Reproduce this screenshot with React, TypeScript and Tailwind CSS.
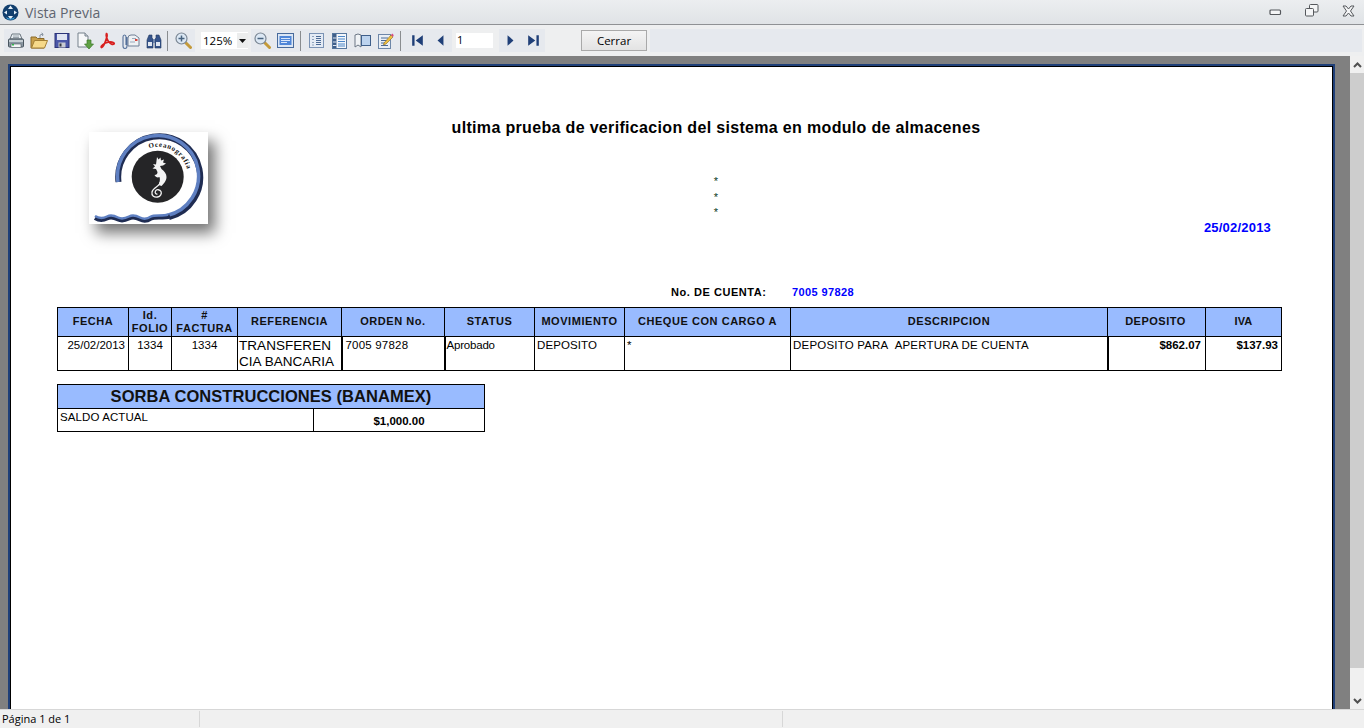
import React from "react";

const arial = "font-['Liberation_Sans',Arial,sans-serif]";

const Printer = () => (
  <svg width="18" height="18" viewBox="0 0 18 18">
    <path d="M5 2h8l2 5H3z" fill="#e8eef2" stroke="#6b7680" />
    <path d="M6 4h6M6 5.500h6" stroke="#9aa4ad" />
    <path d="M1.500 8q0-1 1-1h13q1 0 1 1v6q0 1-1 1h-13q-1 0-1-1z" fill="#8b98a3" stroke="#4a5660" />
    <rect x="2" y="8" width="14" height="2" fill="#c6ced4" />
    <rect x="4" y="12" width="10" height="3.500" fill="#f4f6f7" stroke="#4a5660" strokeWidth="0.6" />
    <rect x="5" y="12" width="2" height="1.500" fill="#2fb84a" />
  </svg>
);

const Folder = () => (
  <svg width="18" height="18" viewBox="0 0 18 18">
    <path d="M1 5h5l1.500 1.500H14V16H1z" fill="#c9a04c" stroke="#8a6a2a" />
    <path d="M10 6V3l3-1M13 2l-1.500-1M13 2l-.5 2" fill="none" stroke="#8592a0" />
    <path d="M1.500 16 4.500 8.500H17.500L14.500 16z" fill="#f6d98a" stroke="#a37f35" />
  </svg>
);

const Save = () => (
  <svg width="16" height="17" viewBox="0 0 16 17">
    <rect x="1" y="1.500" width="14" height="14" fill="#4a57a8" stroke="#2c3578" />
    <rect x="3" y="2" width="10" height="6" fill="#dfe4f2" />
    <rect x="4.500" y="10.500" width="7" height="5" fill="#c8cbd2" />
    <rect x="5.500" y="11.500" width="2" height="3" fill="#30343f" />
  </svg>
);

const Export = () => (
  <svg width="18" height="18" viewBox="0 0 18 18">
    <path d="M2 1h7l3 3v11H2z" fill="#f7f8fa" stroke="#77818c" />
    <path d="M9 1v3h3" fill="#cfd6dd" stroke="#77818c" />
    <path d="M11 8h4v4h2.500l-4.500 5-4.500-5H11z" fill="#5fa044" stroke="#3c7a2a" strokeWidth="0.7" />
  </svg>
);

const Pdf = () => (
  <svg width="17" height="17" viewBox="0 0 17 17">
    <path
      d="M7.500 1.500c-1 2 .5 6 2 8 1.500 2 4 3.500 5.500 2.500 1-1-1.500-2.500-5-2-3 .4-6 2-7.500 4-1 1.500 0 2 1 1 2-2 3.500-7 4.500-10.500 .3-2-.2-3-.5-3z"
      fill="none"
      stroke="#d8201f"
      strokeWidth="1.700"
    />
  </svg>
);

const MailClip = () => (
  <svg width="18" height="18" viewBox="0 0 18 18">
    <path d="M6 6q0-3 3-3h4l4 3v8H6z" fill="#eef1f4" stroke="#6f7f95" />
    <path d="M10 6.500h4" stroke="#9aa9bb" />
    <rect x="13" y="7" width="2.500" height="2" fill="#d8433a" />
    <path d="M8 10h5" stroke="#9aa9bb" />
    <path d="M5 5v9q0 2.500-2 2.500T1 14V5q0-2 1.500-2T4 5v8" fill="none" stroke="#54709a" strokeWidth="1.100" />
  </svg>
);

const Binoculars = () => (
  <svg width="16" height="16" viewBox="0 0 16 16">
    <path d="M3 2h3v3l1 1v9H1V7z" fill="#35548c" stroke="#23395f" strokeWidth="0.6" />
    <path d="M13 2h-3v3L9 6v9h6V7z" fill="#35548c" stroke="#23395f" strokeWidth="0.6" />
    <rect x="2" y="9" width="4" height="4" fill="#dfe7f2" />
    <rect x="10" y="9" width="4" height="4" fill="#dfe7f2" />
    <rect x="7" y="6" width="2" height="4" fill="#6f86ad" />
  </svg>
);

const Magnifier = ({ plus }: { plus?: boolean }) => (
  <svg width="17" height="17" viewBox="0 0 17 17">
    <path d="m10.500 10.500 5 5" stroke="#c49a3a" strokeWidth="3" strokeLinecap="round" />
    <circle cx="6.500" cy="6.500" r="5.500" fill="#dbe7f4" stroke="#7b8794" strokeWidth="1.200" />
    <path d="M3.500 6.500h6" stroke="#47627f" strokeWidth="1.500" />
    {plus && <path d="M6.500 3.500v6" stroke="#47627f" strokeWidth="1.500" />}
  </svg>
);

const PageWide = () => (
  <svg width="17" height="15" viewBox="0 0 17 15">
    <rect x="0.500" y="0.500" width="16" height="14" fill="#dbe6f5" stroke="#476a9c" />
    <rect x="2.500" y="3" width="12" height="9" fill="#4f86d8" />
    <path d="M4 5.500h9M4 7.500h9M4 9.500h6" stroke="#d8e6fa" />
  </svg>
);

const Outline = () => (
  <svg width="15" height="15" viewBox="0 0 15 15">
    <rect x="0.500" y="0.500" width="14" height="14" fill="#e4ebf5" stroke="#7b93b5" />
    <path d="M3 3.500h2M3 6.500h2M3 9.500h2M3 12h2" stroke="#8fa3bd" />
    <path d="M7 3.500h5M7 5.500h5M7 7.500h5M7 9.500h5M7 11.500h5" stroke="#4b6a96" />
  </svg>
);

const Thumbs = () => (
  <svg width="15" height="16" viewBox="0 0 15 16">
    <rect x="0.500" y="0.500" width="14" height="15" fill="#f4f7fb" stroke="#56779f" />
    <rect x="1" y="1" width="3.500" height="14" fill="#3f5f8a" />
    <path d="M6 3.500h7M6 6h7M6 8.500h7M6 11h7M6 13h7" stroke="#4b86c8" />
    <path d="M1 5h3.500M1 9h3.500M1 12.500h3.500" stroke="#dfe7f2" />
  </svg>
);

const Book = () => (
  <svg width="17" height="15" viewBox="0 0 17 15">
    <path d="M1 2q3-2 6 0v12l-3-2-3 2z" fill="#f0f3f6" stroke="#6c7785" />
    <rect x="7.500" y="2.500" width="9" height="10" fill="#bcd3ee" stroke="#3f5f8a" />
  </svg>
);

const Note = () => (
  <svg width="16" height="17" viewBox="0 0 16 17">
    <rect x="0.500" y="2.500" width="12" height="14" fill="#e9eff6" stroke="#6e87a8" />
    <path d="M3 6h7M3 8.500h6M3 11h5M3 13.500h7" stroke="#4b6a96" />
    <path d="m6 11 7-8 2 2-7 7-2.500 1z" fill="#f0c040" stroke="#8a6a20" strokeWidth="0.600" />
    <path d="m13 3 1.200-1.500 1.500 1.500L15 5z" fill="#d6487e" />
  </svg>
);

const Nav = ({ d }: { d: string }) => (
  <svg width="13" height="13" viewBox="0 0 11 11">
    <path d={d} fill="#1f3f78" />
  </svg>
);

const Sep = ({ className }: { className: string }) => <div className={`h-[20px] w-[1px] bg-[#8a8d90] ${className}`} />;

const Tool = ({ children }: { children: React.ReactNode }) => (
  <div className="flex h-full w-[23px] items-center justify-center">{children}</div>
);

const Logo = () => (
  <div className="h-[92px] w-[119px] bg-white shadow-[7px_9px_14px_rgba(0,0,0,0.55)]">
    <svg width="119" height="92" viewBox="0 0 119 92">
      <defs>
        <path id="logoArc" d="M60 16.300A30 30 0 0 1 98.700 40.600" />
      </defs>
      <path d="M29.500 50A41 41 0 1 1 80 85" fill="none" stroke="#1f2c52" strokeWidth="6" />
      <path d="M29 50A40.500 40.500 0 1 1 78 83.500" fill="none" stroke="#5f80c2" strokeWidth="3.500" />
      <circle cx="68.700" cy="44.700" r="26" fill="#252527" />
      <text className="font-['Liberation_Serif',serif]" fontSize="7" fontWeight="700" letterSpacing="0.700" fill="#111">
        <textPath href="#logoArc">Oceanografia</textPath>
      </text>
      {/* caballito de mar */}
      <path
        d="M68 25l1.500 2.500 2-2 .5 3 3-1-1 3 3 1-3 2-3 .5 1.500 3c3 2 5 5 5 8 0 4-3 7-5 9l-3-1c1-3 2-5 1-8-2 1-4 0-5-2 2 0 3-1 3-3l-1.500-3-3.500-.5 2.500-2-2-2.500 3 .5z"
        fill="#f4f4f4"
      />
      <path
        d="M71 50c1 4-7 5-8 10-.8 4 2.500 5.500 5.500 5s4.500-3.500 3.500-5.500-4.500-2.500-5.500-.5 .5 3.500 2 3"
        fill="none"
        stroke="#f4f4f4"
        strokeWidth="1.300"
      />
      <path
        d="M6 86c4 2.500 8 2.500 12 .5s7-1 11 1 7 1 11-1 7-1 11 1 8 1 11-1 12 0 19-2"
        fill="none"
        stroke="#1f2c52"
        strokeWidth="4"
      />
      <path
        d="M6 84c4 2.500 8 2.500 12 .5s7-1 11 1 7 1 11-1 7-1 11 1 8 1 11-1 12 0 17-2"
        fill="none"
        stroke="#5f80c2"
        strokeWidth="2.500"
      />
    </svg>
  </div>
);

const widths = [71, 43, 66, 104, 103, 90, 90, 166, 317, 98, 76];

const headers: { label: React.ReactNode; cls?: string }[] = [
  { label: "FECHA" },
  { label: <>Id.<br />FOLIO</> },
  { label: <>#<br />FACTURA</> },
  { label: "REFERENCIA" },
  { label: "ORDEN No." },
  { label: "STATUS" },
  { label: "MOVIMIENTO" },
  { label: "CHEQUE CON CARGO A" },
  { label: "DESCRIPCION" },
  { label: "DEPOSITO", cls: "tracking-[0.5px] pr-[2px]" },
  { label: "IVA", cls: "tracking-[0.1px]" },
];

export default function App() {
  return (
    <div className={`flex h-[728px] w-[1364px] flex-col overflow-hidden bg-[#f0f0f0] ${arial}`}>
      {/* title bar */}
      <div className="flex h-[25px] shrink-0 items-center border-b border-[#8f9194] bg-gradient-to-b from-[#eceef0] to-[#e0e3e6]">
        <svg className="ml-[2px]" width="17" height="17" viewBox="0 0 17 17">
          <circle cx="8.500" cy="8.500" r="8" fill="#123f6e" />
          <path d="M8.500 1.500 11 5H6zM8.500 15.500 6 12h5zM2 8.500 5 6.500v4zM15 8.500l-3-2v4z" fill="#e6f0f8" />
          <path d="M4 13q4.500 3 9 0l-1.500 2.500h-6z" fill="#3fa0d8" />
        </svg>
        <span className="ml-[6px] font-['Open_Sans',sans-serif] text-[14px] text-[#5f6570]">Vista Previa</span>
        <div className="ml-auto flex items-center">
          <svg width="13" height="7" viewBox="0 0 13 7">
            <rect x="1" y="1" width="10.500" height="4.500" rx="1" fill="#f4f5f6" stroke="#55585c" strokeWidth="1.200" />
          </svg>
          <svg className="ml-[23px] -mt-[3px]" width="14" height="13" viewBox="0 0 14 13">
            <rect x="4.500" y="0.500" width="8.500" height="7.500" rx="1" fill="#f4f5f6" stroke="#55585c" />
            <rect x="0.500" y="4.500" width="8" height="7.500" rx="1" fill="#f4f5f6" stroke="#55585c" />
          </svg>
          <svg className="ml-[23px] mr-[9px] -mt-[3px]" width="13" height="12" viewBox="0 0 13 12">
            <path d="M1 1h3l2.500 3L9 1h3L8.500 6 12 11H9L6.500 8 4 11H1l3.500-5z" fill="#f4f5f6" stroke="#55585c" />
          </svg>
        </div>
      </div>

      {/* toolbar */}
      <div className="flex h-[31px] shrink-0 items-center bg-[#eeeff0] pl-[4px] pr-[2px] text-black">
        <div className="flex h-[23px] items-center bg-[#e6e9ee]">
          <Tool><Printer /></Tool>
          <Tool><Folder /></Tool>
          <Tool><Save /></Tool>
          <Tool><Export /></Tool>
          <Tool><Pdf /></Tool>
          <Tool><MailClip /></Tool>
          <Tool><Binoculars /></Tool>
          <Sep className="ml-[2px] mr-[4px]" />
          <Tool><Magnifier plus /></Tool>
        </div>
        <div className="ml-[6px] flex h-[17px] w-[47px] items-center bg-white pl-[2px] font-['Open_Sans',sans-serif] text-[11.500px]">
          <span className="flex-1">125%</span>
          <span className="flex h-[15px] w-[11px] items-center justify-center bg-[#eceded]">
            <svg width="7" height="4" viewBox="0 0 7 4"><path d="M0 0h7L3.500 4z" fill="#111" /></svg>
          </span>
        </div>
        <div className="ml-[3px] flex h-[23px] items-center bg-[#e6e9ee]">
          <Tool><Magnifier /></Tool>
          <Tool><PageWide /></Tool>
          <Sep className="ml-[3px] mr-[4px]" />
          <Tool><Outline /></Tool>
          <Tool><Thumbs /></Tool>
          <Tool><Book /></Tool>
          <Tool><Note /></Tool>
          <Sep className="ml-[3px] mr-[5px]" />
          <Tool><Nav d="M1 1h2v9H1zM10 1v9L4 5.500z" /></Tool>
          <Tool><Nav d="M8 1v9L3 5.500z" /></Tool>
        </div>
        <div className="ml-[4px] flex h-[15px] w-[37px] items-center bg-white pl-[1px] font-['Open_Sans',sans-serif] text-[11px]">1</div>
        <div className="ml-[6px] flex h-[23px] items-center bg-[#e6e9ee]">
          <Tool><Nav d="M3 1v9l5-4.500z" /></Tool>
          <Tool><Nav d="M1 1v9l6-4.500zM8 1h2v9H8z" /></Tool>
        </div>
        <button className="ml-[36px] flex h-[21px] w-[66px] items-center justify-center border border-[#a9a9a9] bg-gradient-to-b from-[#f4f4f4] to-[#e3e3e3] font-['Open_Sans',sans-serif] text-[11.500px] text-black">
          Cerrar
        </button>
        <div className="ml-[3px] h-[23px] flex-1 bg-[#e6e9ee]" />
      </div>

      {/* viewer */}
      <div className="flex min-h-0 flex-1">
        <div className="flex-1 overflow-hidden bg-[#808080] pl-[8px] pr-[15px] pt-[8px]">
          <div className="h-[700px] border-[2px] border-b-0 border-[#1f3f78]">
            <div className="h-full border border-b-0 border-black bg-white pl-[46px] text-black">
              {/* report header */}
              <div className="flex">
                <div className="w-[151px] shrink-0 pl-[32px] pt-[65px]">
                  <Logo />
                </div>
                <div className="w-[1063px] shrink-0 pt-[52px]">
                  <div className="w-[1016px] text-center text-[16px] font-bold leading-[18px] tracking-[0.33px]">
                    ultima prueba de verificacion del sistema en modulo de almacenes
                  </div>
                  <div className="mt-[37px] w-[1016px] text-center text-[11px] leading-[15.500px] text-[#0a3a1a]">
                    <div>*</div>
                    <div>*</div>
                    <div>*</div>
                  </div>
                  <div className="text-right text-[13px] font-bold leading-[14px] tracking-[0.2px] text-[#0000ff]">25/02/2013</div>
                </div>
              </div>

              {/* cuenta */}
              <div className="mt-[50px] flex text-[11px] font-bold leading-[14px]">
                <span className="ml-[614px] w-[121px] tracking-[0.55px]">No. DE CUENTA:</span>
                <span className="text-[#0000ff] tracking-[0.4px]">7005 97828</span>
              </div>

              {/* movimientos */}
              <table className="mt-[8px] table-fixed border-collapse" style={{ width: 1224 }}>
                <colgroup>
                  {widths.map((w, i) => (
                    <col key={i} style={{ width: w }} />
                  ))}
                </colgroup>
                <thead>
                  <tr className="h-[29px] bg-[#99bbff]">
                    {headers.map((h, i) => (
                      <th
                        key={i}
                        className={`border border-black p-0 text-center text-[11px] font-bold leading-[13px] text-[#111] ${h.cls ?? "tracking-[0.55px]"}`}
                      >
                        {h.label}
                      </th>
                    ))}
                  </tr>
                </thead>
                <tbody>
                  <tr className="h-[34px] align-top text-[11.500px] leading-[14px]">
                    <td className="border border-black pr-[3px] pt-[1px] text-right">25/02/2013</td>
                    <td className="border border-black pt-[1px] text-center">1334</td>
                    <td className="border border-black pt-[1px] text-center">1334</td>
                    <td className="border border-black pl-[1px] pt-[1px] text-[13.500px] leading-[16px] tracking-[0.05px]">TRANSFEREN<br />CIA BANCARIA</td>
                    <td className="border border-black border-l-2 pl-[3px] pt-[1px] tracking-[0.2px]">7005 97828</td>
                    <td className="border border-black border-l-2 pl-[1px] pt-[1px] tracking-[-0.2px]">Aprobado</td>
                    <td className="border border-black pl-[2px] pt-[1px] tracking-[0.1px]">DEPOSITO</td>
                    <td className="border border-black pl-[2px] pt-[1px]">*</td>
                    <td className="border border-black pl-[2px] pt-[1px] tracking-[0.2px]">DEPOSITO PARA&nbsp; APERTURA DE CUENTA</td>
                    <td className="border border-black border-l-2 pr-[4px] pt-[1px] text-right font-bold">$862.07</td>
                    <td className="border border-black pr-[3px] pt-[1px] text-right font-bold">$137.93</td>
                  </tr>
                </tbody>
              </table>

              {/* saldo */}
              <table className="mt-[13px] table-fixed border-collapse" style={{ width: 427 }}>
                <colgroup>
                  <col style={{ width: 256 }} />
                  <col style={{ width: 171 }} />
                </colgroup>
                <thead>
                  <tr className="h-[24px] bg-[#99bbff]">
                    <th colSpan={2} className="border border-black p-0 text-center text-[16.500px] font-bold leading-[20px] tracking-[0.05px] text-[#111]">
                      SORBA CONSTRUCCIONES (BANAMEX)
                    </th>
                  </tr>
                </thead>
                <tbody>
                  <tr className="h-[23px] text-[11.500px] leading-[14px]">
                    <td className="border border-black pl-[2px] pt-[1px] align-top tracking-[0.1px]">SALDO ACTUAL</td>
                    <td className="border border-black pt-[2px] text-center font-bold">$1,000.00</td>
                  </tr>
                </tbody>
              </table>
            </div>
          </div>
        </div>

        {/* scrollbar */}
        <div className="flex w-[14px] shrink-0 flex-col bg-[#f0f0f0]">
          <div className="flex h-[17px] shrink-0 items-center justify-center">
            <svg width="9" height="6" viewBox="0 0 9 6"><path d="M1 5l3.500-3.500L8 5" fill="none" stroke="#505050" strokeWidth="2" /></svg>
          </div>
          <div className="h-[595px] shrink-0 bg-[#cdcdcd]" />
          <div className="mt-auto flex h-[17px] shrink-0 items-center justify-center">
            <svg width="9" height="6" viewBox="0 0 9 6"><path d="M1 1l3.500 3.500L8 1" fill="none" stroke="#505050" strokeWidth="2" /></svg>
          </div>
        </div>
      </div>

      {/* status bar */}
      <div className="flex h-[19px] shrink-0 items-center border-t border-[#d7d7d7] bg-[#f0f0f0] font-['Open_Sans',sans-serif] text-[11px] text-black">
        <div className="flex h-[16px] w-[200px] items-center border-r border-[#d7d7d7] pl-[2px]">Página 1 de 1</div>
        <div className="h-[16px] w-[583px] border-r border-[#d7d7d7]" />
      </div>
    </div>
  );
}
